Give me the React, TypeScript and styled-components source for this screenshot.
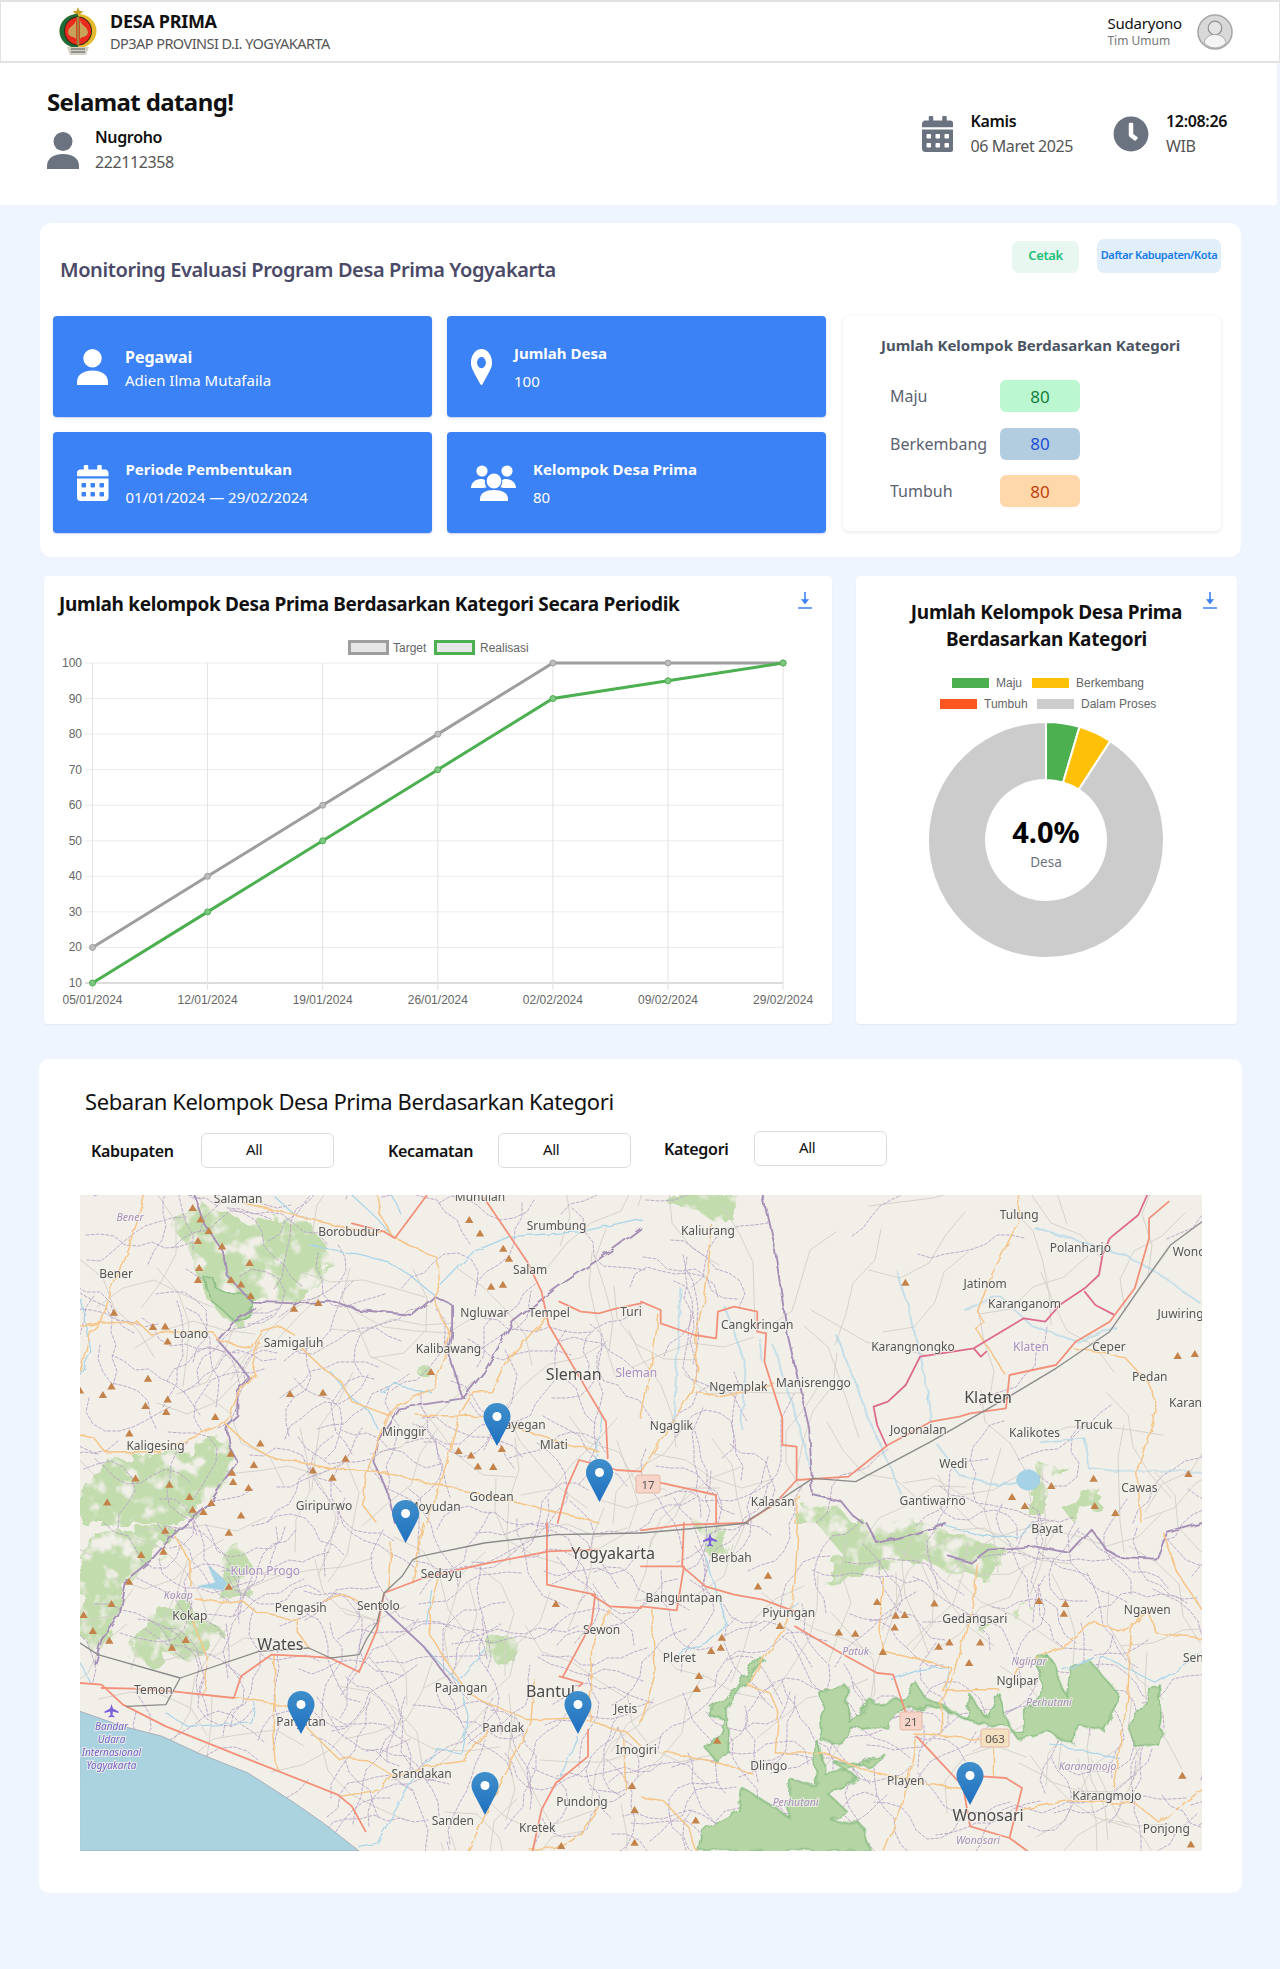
import React from "react";
import styled, { createGlobalStyle } from "styled-components";
import { FaCalendarAlt, FaClock, FaMapMarkerAlt } from "react-icons/fa";

const GlobalStyle = createGlobalStyle`
  * { box-sizing: border-box; }
  body {
    margin: 0;
    background: #eef5fe;
    font-family: "Noto Sans", "Open Sans", sans-serif;
    color: #111;
  }
`;

const Page = styled.div`
  min-height: 1969px;
  width: 1280px;
`;

const Header = styled.header`
  height: 63px;
  background: #fff;
  border: 1px solid #e2e2e2;
  border-width: 2px 1px 2px 1px;
  display: flex;
  align-items: center;
  justify-content: space-between;
  padding: 0 46px 0 58px;
`;
const Brand = styled.div`
  display: flex;
  align-items: center;
  gap: 13px;
`;
const BrandName = styled.div`
  font-size: 18px;
  font-weight: 700;
  line-height: 22px;
  letter-spacing: -0.3px;
`;
const BrandSub = styled.div`
  font-size: 14.5px;
  line-height: 22px;
  color: #555;
  letter-spacing: -0.55px;
`;
const Account = styled.div`
  display: flex;
  align-items: center;
  gap: 15px;
`;
const AccountName = styled.div`
  font-size: 15px;
  line-height: 19px;
  letter-spacing: -0.2px;
`;
const AccountRole = styled.div`
  font-size: 12px;
  line-height: 16px;
  color: #777;
`;

const Welcome = styled.section`
  width: 1277px;
  height: 142px;
  background: #fff;
  display: flex;
  justify-content: space-between;
  padding: 23px 50px 0 47px;
`;
const WelcomeTitle = styled.h1`
  margin: 0;
  font-size: 24px;
  line-height: 32px;
  font-weight: 700;
  letter-spacing: -0.6px;
`;
const Person = styled.div`
  display: flex;
  align-items: center;
  gap: 16px;
  margin-top: 7px;
`;
const Strong = styled.div`
  font-size: 16px;
  line-height: 25px;
  font-weight: 600;
  color: #111;
  letter-spacing: -0.35px;
`;
const Muted = styled.div`
  font-size: 16px;
  line-height: 25px;
  color: #555;
  letter-spacing: -0.4px;
`;
const Clocks = styled.div`
  display: flex;
  gap: 40px;
  padding-top: 23px;
`;
const ClockItem = styled.div`
  display: flex;
  align-items: center;
  gap: 17px;
  height: 50px;
  color: #6b7280;
`;
const CalendarIcon = styled(FaCalendarAlt)`
  width: 31.5px;
  height: 36px;
`;

const MainCard = styled.section`
  margin: 18px 39px 0 40px;
  height: 334px;
  background: #fff;
  border-radius: 12px;
  padding: 16px 20px 0 13px;
`;
const MainHead = styled.div`
  height: 77px;
  display: flex;
  justify-content: space-between;
  padding-left: 7px;
`;
const MainTitle = styled.h2`
  margin: 16px 0 0;
  font-size: 20px;
  line-height: 30px;
  font-weight: 600;
  color: #4a4a68;
  letter-spacing: -0.4px;
`;
const HeadButtons = styled.div`
  display: flex;
  align-items: flex-end;
  gap: 18px;
  height: 34px;
`;
const SoftButton = styled.button<{ $bg: string; $color: string; $w: number; $h: number; $size: number }>`
  width: ${(p) => p.$w}px;
  height: ${(p) => p.$h}px;
  padding: 0 0 4px;
  border: 0;
  border-radius: 7px;
  background: ${(p) => p.$bg};
  color: ${(p) => p.$color};
  font: 600 ${(p) => p.$size}px "Noto Sans", sans-serif;
  letter-spacing: -0.4px;
  white-space: nowrap;
`;
const StatGrid = styled.div`
  display: grid;
  grid-template-columns: 379px 379px 378px;
  grid-template-rows: 101px 101px;
  gap: 15px;
`;
const StatCard = styled.div<{ $gap: number }>`
  background: #3b82f6;
  border-radius: 4px;
  box-shadow: 0 1px 2px rgba(30, 64, 175, 0.25);
  color: #fff;
  display: flex;
  align-items: center;
  gap: ${(p) => p.$gap}px;
  padding-left: 24px;
`;
const PinIcon = styled(FaMapMarkerAlt)`
  width: 21px;
  height: 36px;
`;
const StatBody = styled.div<{ $shift: number }>`
  padding-top: ${(p) => p.$shift}px;
`;
const StatTitle = styled.div<{ $size?: number }>`
  font-size: ${(p) => p.$size || 15}px;
  line-height: 20px;
  font-weight: 700;
`;
const StatValue = styled.div<{ $top: number }>`
  font-size: 15px;
  line-height: 20px;
  margin-top: ${(p) => p.$top}px;
`;
const CategoryCard = styled.div`
  grid-column: 3;
  grid-row: 1 / span 2;
  height: 215px;
  margin: 0 -2px 0 2px;
  border-radius: 6px;
  box-shadow: 0 1px 4px rgba(0, 0, 0, 0.1);
  padding: 18px 0 0 47px;
`;
const CategoryTitle = styled.div`
  margin: 0 0 24px -9px;
  font-size: 15px;
  line-height: 22px;
  font-weight: 700;
  color: #4b5563;
`;
const CategoryRow = styled.div`
  display: flex;
  align-items: center;
  height: 32px;
  margin-bottom: 15.5px;
  font-size: 16px;
  color: #5b6270;
`;
const CategoryLabel = styled.div`
  width: 110px;
`;
const CategoryPill = styled.div<{ $bg: string; $color: string }>`
  width: 80px;
  height: 32px;
  border-radius: 6px;
  background: ${(p) => p.$bg};
  color: ${(p) => p.$color};
  display: flex;
  align-items: center;
  justify-content: center;
  font-size: 17px;
`;

const ChartRow = styled.div`
  display: flex;
  gap: 24px;
  margin: 19px 0 0 44px;
`;
const ChartCard = styled.section<{ $w: number }>`
  position: relative;
  width: ${(p) => p.$w}px;
  height: 448px;
  background: #fff;
  border-radius: 4px;
  box-shadow: 0 1px 2px rgba(0, 0, 0, 0.05);
`;
const LineTitle = styled.h3`
  margin: 0;
  height: 54px;
  padding: 14px 0 0 15px;
  font-size: 19px;
  line-height: 28px;
  font-weight: 700;
  letter-spacing: -0.33px;
`;
const DonutTitle = styled.h3`
  margin: 0;
  height: 89px;
  padding-top: 23px;
  font-size: 19px;
  line-height: 27px;
  font-weight: 700;
  text-align: center;
  letter-spacing: -0.3px;
`;
const DownloadLink = styled.a`
  position: absolute;
  top: 16px;
  right: 20px;
  display: block;
  width: 14px;
  height: 17px;
  color: #3b82f6;
`;
const ChartSvg = styled.svg`
  display: block;
  font-family: "Liberation Sans", Arial, sans-serif;
  font-size: 12px;
  fill: #666;
`;

const MapCard = styled.section`
  margin: 35px 38px 0 39px;
  height: 834px;
  background: #fff;
  border-radius: 10px;
  padding: 27px 0 0 41px;
`;
const MapTitle = styled.h2`
  margin: 0 0 17px 5px;
  font-size: 22px;
  line-height: 30px;
  font-weight: 400;
  letter-spacing: -0.42px;
`;
const Filters = styled.div`
  display: flex;
  align-items: flex-start;
  padding-left: 11px;
  margin-bottom: 27px;
`;
const FilterGroup = styled.label<{ $after: number; $lift: number }>`
  display: flex;
  align-items: center;
  margin-right: ${(p) => p.$after}px;
  margin-top: ${(p) => p.$lift}px;
  font-size: 16px;
  font-weight: 600;
  letter-spacing: -0.3px;
`;
const FilterName = styled.span<{ $w: number }>`
  width: ${(p) => p.$w}px;
`;
const FilterBox = styled.div`
  width: 133px;
  height: 35px;
  border: 1px solid #dcdcdc;
  border-radius: 6px;
  padding-left: 44px;
  font-size: 15px;
  font-weight: 400;
  line-height: 31px;
`;
const MapSvg = styled.svg`
  display: block;
  background: #f2efe9;
  filter: blur(0.45px);
`;
const Line = styled.path<{ $color: string; $w: number; $dash?: string; $fill?: string }>`
  fill: ${(p) => p.$fill || "none"};
  stroke: ${(p) => p.$color};
  stroke-width: ${(p) => p.$w};
  stroke-dasharray: ${(p) => p.$dash || "none"};
  stroke-linejoin: round;
  stroke-linecap: round;
  vector-effect: non-scaling-stroke;
`;
type LabelKind = "s" | "b" | "i" | "p" | "a";
const labelSize: Record<LabelKind, number> = { s: 12, b: 16, i: 10.5, p: 12, a: 10 };
const labelColor: Record<LabelKind, string> = { s: "#555", b: "#4a4a4a", i: "#a58fb8", p: "#a98fc0", a: "#7a5fc8" };
const MapLabel = styled.text<{ $kind: LabelKind }>`
  font-family: "Noto Sans", sans-serif;
  font-size: ${(p) => labelSize[p.$kind]}px;
  font-style: ${(p) => (p.$kind === "i" || p.$kind === "a" ? "italic" : "normal")};
  fill: ${(p) => labelColor[p.$kind]};
  stroke: rgba(245, 243, 238, 0.75);
  stroke-width: 2px;
  paint-order: stroke;
  text-anchor: middle;
  dominant-baseline: central;
`;
const Shield = styled.text`
  font-family: "Noto Sans", sans-serif;
  font-size: 11.5px;
  fill: #555;
  text-anchor: middle;
  dominant-baseline: central;
`;

const UserGlyph = ({ w, h, color }: { w: number; h: number; color: string }) => (
  <svg width={w} height={h} viewBox="0 0 32 37" fill={color}>
    <circle cx="16" cy="9.5" r="9.5" />
    <path d="M0 37v-3c0-8 7-12 16-12s16 4 16 12v3z" />
  </svg>
);

const GroupGlyph = () => (
  <svg width="45" height="36" viewBox="0 0 45 36" fill="#fff">
    <circle cx="11" cy="6" r="5.6" />
    <circle cx="36" cy="6" r="5.6" />
    <circle cx="23" cy="16" r="7.4" />
    <path d="M0 23c0-5 4-9 10-9 2 0 3 .5 4 1-.6 2 0 5 1.6 7.5-2 0-3 .5-4 .5z" />
    <path d="M45 23c0-5-4-9-10-9-2 0-3 .5-4 1 .6 2 0 5-1.6 7.5 2 0 3 .5 4 .5z" />
    <path d="M9 36v-2c0-6 6-9 14-9s14 3 14 9v2z" />
  </svg>
);

const Emblem = () => (
  <svg width="38" height="49" viewBox="0 0 38 49">
    <path d="M19 0l1.6 4 4 .2-3 2.6 1 3.8-3.6-2.2-3.6 2.2 1-3.8-3-2.6 4-.2z" fill="#c9a227" />
    <ellipse cx="19" cy="24" rx="18.5" ry="17" fill="#e3b92e" />
    <path d="M19 7C9 7 .5 14 .5 24S9 41 19 41z" fill="#1f6b3a" />
    <ellipse cx="19" cy="24" rx="14" ry="14.500" fill="#3a2a14" />
    <ellipse cx="19" cy="24" rx="13" ry="13.500" fill="#ea2a1c" />
    <path d="M17 13c-1 6-8 6-8 13 2 5 6 3 8 6zM21 13c1 6 8 6 8 13-2 5-6 3-8 6z" fill="#c9a35a" />
    <rect x="17.6" y="10" width="2.8" height="28" fill="#a9813a" />
    <path d="M8 40h22l-3 8H11z" fill="#d4d0c4" />
    <path d="M12 42h14M12 45h14" stroke="#555" strokeWidth="1" />
  </svg>
);

const Avatar = () => (
  <svg width="36" height="36" viewBox="0 0 36 36">
    <circle cx="18" cy="18" r="17" fill="#d8d8d8" stroke="#a8a8a8" strokeWidth="1.6" />
    <circle cx="18" cy="14" r="6.8" fill="#e4e4e4" stroke="#8f8f8f" strokeWidth="1.2" />
    <path d="M7 29c1-6 6-8.500 11-8.500S28 23 29 29c-3 3-7 5-11 5S10 32 7 29z" fill="#f4f4f4" stroke="#9a9a9a" strokeWidth="0.8" />
  </svg>
);

const DownloadIcon = () => (
  <DownloadLink>
    <svg width="14" height="17" viewBox="0 0 14 17" fill="none" stroke="currentColor">
      <path d="M7 0v11" strokeWidth="1.6" />
      <path d="M3.500 7.500L7 12l3.500-4.500z" fill="currentColor" strokeWidth="0.6" />
      <path d="M0 16h14" strokeWidth="1.5" />
    </svg>
  </DownloadLink>
);

const xLabels = ["05/01/2024", "12/01/2024", "19/01/2024", "26/01/2024", "02/02/2024", "09/02/2024", "29/02/2024"];
const target = [20, 40, 60, 80, 100, 100, 100];
const actual = [10, 30, 50, 70, 90, 95, 100];
const px = (i: number) => 48.5 + i * 115.1;
const py = (v: number) => 33 + ((100 - v) * 320) / 90;
const yTicks = [100, 90, 80, 70, 60, 50, 40, 30, 20, 10];
const pointsOf = (vals: number[]) => vals.map((v, i) => `${px(i)},${py(v)}`).join(" ");

const LineChart = () => (
  <ChartSvg width="788" height="394" viewBox="0 0 788 394">
    <rect x="305.500" y="11.500" width="38" height="12" fill="#e6e6e6" stroke="#9e9e9e" strokeWidth="3" />
    <text x="349" y="21.500">Target</text>
    <rect x="391.500" y="11.500" width="38" height="12" fill="#e6e6e6" stroke="#4caf50" strokeWidth="3" />
    <text x="436" y="21.500">Realisasi</text>
    {yTicks.map((v) => (
      <g key={v}>
        <line x1="41" x2="739" y1={py(v)} y2={py(v)} stroke={v === 10 ? "#dcdcdc" : "#ececec"} strokeWidth={v === 10 ? 2 : 1} />
        <text x="38" y={py(v) + 4} textAnchor="end">{v}</text>
      </g>
    ))}
    {xLabels.map((label, i) => (
      <g key={label}>
        <line x1={px(i)} x2={px(i)} y1="33" y2="360" stroke="#e2e2e2" />
        <text x={px(i)} y="374" textAnchor="middle">{label}</text>
      </g>
    ))}
    <polyline points={pointsOf(target)} fill="none" stroke="#9e9e9e" strokeWidth="3" />
    <polyline points={pointsOf(actual)} fill="none" stroke="#4caf50" strokeWidth="3" />
    {target.map((v, i) => <circle key={i} cx={px(i)} cy={py(v)} r="3" fill="#bdbdbd" stroke="#9e9e9e" />)}
    {actual.map((v, i) => <circle key={i} cx={px(i)} cy={py(v)} r="3" fill="#81c784" stroke="#4caf50" />)}
  </ChartSvg>
);

const polar = (r: number, deg: number) => {
  const a = (deg * Math.PI) / 180;
  return `${190 + r * Math.sin(a)} ${175 - r * Math.cos(a)}`;
};
const slice = (from: number, to: number) => {
  const big = to - from > 180 ? 1 : 0;
  return `M${polar(118, from)}A118 118 0 ${big} 1 ${polar(118, to)}L${polar(60, to)}A60 60 0 ${big} 0 ${polar(60, from)}Z`;
};
const legend = [
  { x: 96, y: 13, color: "#4caf50", name: "Maju" },
  { x: 176, y: 13, color: "#ffc107", name: "Berkembang" },
  { x: 84, y: 34, color: "#ff5722", name: "Tumbuh" },
  { x: 181, y: 34, color: "#cccccc", name: "Dalam Proses" },
];

const DonutChart = () => (
  <ChartSvg width="381" height="359" viewBox="0 0 381 359">
    {legend.map((l) => (
      <g key={l.name}>
        <rect x={l.x} y={l.y} width="37" height="10" fill={l.color} />
        <text x={l.x + 44} y={l.y + 9}>{l.name}</text>
      </g>
    ))}
    <path d={slice(0, 16.5)} fill="#4caf50" stroke="#fff" strokeWidth="2" />
    <path d={slice(16.5, 33)} fill="#ffc107" stroke="#fff" strokeWidth="2" />
    <path d={slice(33, 360)} fill="#cccccc" stroke="#fff" strokeWidth="2" />
    <text x="190" y="178" textAnchor="middle" fontSize="29" fontWeight="700" fill="#000" fontFamily="Noto Sans, sans-serif">4.0%</text>
    <text x="190" y="202" textAnchor="middle" fontSize="13.5" fill="#6b7280" fontFamily="Noto Sans, sans-serif">Desa</text>
  </ChartSvg>
);

type Tri = [number, number];
type Lbl = [string, number, number, LabelKind?];
type Quad = {
  ox: number; oy: number;
  light?: string; forest?: string; sea?: string; lake?: string;
  water?: string; border?: string; yellow?: string; red?: string; pink?: string; rail?: string;
  tris: Tri[]; labels: Lbl[];
};

const quads: Quad[] = [
  {
    ox: 0, oy: 0,
    light: "M250 70L310 50L330 10L420 60L480 90L570 60L650 90L700 200L640 320L500 320L440 390L410 380L360 320L320 220L300 150L255 100Z M0 984L0 900L60 810L150 780L320 760L400 720L430 790L360 930L300 984Z M940 510L965 500L990 540L945 540Z",
    forest: "M350 250L370 245L380 280L440 300L480 300L490 345L430 375L360 310Z",
    water: "M540 0L600 60L640 70 M760 0L830 70L870 120 M870 0L900 60 M1568 70L1400 110L1200 125L1100 170L1010 270 M640 150L760 175L860 200L920 240L990 300 M0 310L20 400L30 470L0 540 M700 530L760 610L810 650L830 700 M840 590L880 565L940 590L980 590 M1460 660L1440 800",
    border: "M320 0L350 90L400 170L410 240L480 320L600 325L710 320L780 345L930 360L990 305L1040 330L1040 420L1030 480L1060 580L1070 610 M1070 610L1130 530L1210 380L1330 280L1480 170L1568 100 M490 340L430 380L385 435L430 490L475 550L440 590L440 660L410 690L420 760L440 800L400 860L360 930L300 984 M1070 610L890 640L830 740L820 800L860 890L880 984",
    yellow: "M460 25L560 50L690 85L750 100L830 115L860 100 M830 0L840 60L870 120L920 150L1000 190L1005 280L990 310L1010 370L1035 410L1020 490L985 580L890 630L860 660L760 620L730 560L680 520L620 460 M0 395L50 385L160 380L200 420L260 410L370 410L390 440L480 460L510 410L560 395L600 420 M500 440L480 500L490 540L440 600L420 660L380 700L300 735L220 770L70 770L40 730L0 720 M400 680L460 740L530 785L700 820L860 835L1000 870L1220 920L1400 970L1450 984 M860 660L830 740L800 840L790 930L830 984 M940 660L1130 665 M1200 690L1280 720L1350 745L1450 770 M1100 590L1060 660L1010 860L970 984 M1100 590L1150 590L1190 500L1300 370 M180 0L170 50L130 170L90 280L60 380L30 410L0 530",
    red: "M970 0L880 130L850 110L760 85 M1130 10L1250 200L1290 290L1310 390L1420 590L1470 680L1475 790 M1340 320L1400 350L1450 355L1500 340L1568 325 M1395 795L1500 825L1568 830 M1395 795L1360 880L1335 984",
    tris: [[315,38],[337,72],[360,107],[397,153],[330,137],[474,203],[333,218],[330,254],[422,254],[450,267],[477,302],[598,340],[666,323],[95,352],[204,395],[238,393],[245,438],[190,550],[88,573],[64,599],[183,632],[245,612],[241,650],[378,665],[138,714],[504,744],[421,775],[486,809],[425,832],[428,860],[471,878],[450,960],[367,923],[345,950],[315,943],[306,905],[250,868],[155,849],[76,921],[587,596],[679,592],[742,790],[651,825],[706,847],[1088,74],[1118,114],[1183,160],[1199,190],[1149,274],[1182,268],[981,530],[1058,767],[1093,780],[1112,813],[1155,815],[1179,761],[0,585]],
    labels: [["Salaman",442,10],["Bener",140,65,"i"],["Borobudur",752,108],["Muntilan",1118,3],["Srumbung",1332,90],["Salam",1258,224],["Bener",101,234],["Ngluwar",1130,352],["Tempel",1312,353],["Turi",1540,350],["Loano",310,416],["Samigaluh",597,441],["Kalibawang",1030,460],["Sleman",1380,537,"b"],["Sleman",1555,533,"p"],["Kaligesing",211,751],["Minggir",906,708],["Sayegan",1235,688],["Mlati",1324,747],["Giripurwo",682,930],["Moyudan",990,935],["Godean",1150,905]],
  },
  {
    ox: 561, oy: 0,
    light: "M80 0L270 0L250 60L215 90L180 60L110 30L70 30Z M1120 810L1190 810L1140 870L1130 960L1080 960L1090 900Z M1170 930L1220 905L1280 880L1280 940L1190 960Z M440 920L540 920L590 984L430 984Z",
    water: "M545 420L590 540L640 680L690 800L730 900 M715 230L750 340L770 440L800 580L810 680 M830 750L890 840L1000 870L1100 850 M1100 100L1200 130L1350 180L1440 230L1568 330 M905 345L1000 300L1090 390L1220 440L1330 400 M110 280L100 500L90 700 M230 330L290 500L280 700 M330 430L340 500 M370 450L430 650L470 810 M1120 745L1240 730L1250 820L1320 830L1568 830",
    lake: "M1050 855a32 30 0 1 0 64 0a32 30 0 1 0 -64 0",
    border: "M340 0L375 170L410 420L470 700L480 900L560 920L590 960L620 984",
    yellow: "M1055 0L1055 80L980 240L940 350L960 385L935 400L1020 540 M200 90L180 290L150 430L160 530L140 590L0 830 M150 590L220 605L290 590L370 565 M50 360L30 500L0 670 M1210 460L1350 485L1425 570L1440 650L1385 830L1400 984 M440 900L430 984",
    red: "M0 320L55 345L55 385L150 420L210 430L215 350L260 335L325 350L325 410L350 415L345 500L395 670L395 750L435 755L435 855L580 845L690 750L810 680L890 665L920 655L1020 640L1030 540L1160 510L1215 440L1310 380L1380 280L1420 130L1420 70L1475 20 M0 858L50 862L210 900L210 984 M435 855L370 930L290 984",
    pink: "M1415 0L1390 60L1310 130L1290 180L1280 240L1240 280L1170 330L1130 380L1070 370L930 460L780 485L740 570L690 620L650 635L660 690L685 750 M1240 290L1270 330L1320 358 M930 460L950 485L965 470",
    rail: "M1568 80L1480 150L1400 270L1310 410L1160 520L1020 610L810 740L600 860L480 850L290 984",
    tris: [[739,262],[1500,482],[1548,476],[1265,850],[1147,872],[1037,905],[1073,932],[1268,932],[1326,953],[1530,836]],
    labels: [["Tulung",1057,58],["Polanharjo",1228,157],["Wono",1532,168],["Jatinom",962,265],["Karanganom",1072,325],["Juwiring",1508,355],["Kaliurang",187,105],["Cangkringan",325,387],["Karangnongko",760,455],["Klaten",1090,455,"p"],["Ceper",1308,455],["Pedan",1422,545],["Klaten",970,606,"b"],["Ngemplak",272,575],["Manisrenggo",482,563],["Ngaglik",85,692],["Jogonalan",775,702],["Kalikotes",1100,711],["Trucuk",1265,688],["Karan",1522,623],["Wedi",873,805],["Kalasan",368,920],["Gantiwarno",815,917],["Cawas",1393,877]],
  },
  {
    ox: 0, oy: 328,
    sea: "M0 565L120 610L230 640L330 690L470 750L600 840L680 900L780 984L0 984Z",
    lake: "M360 130L380 180L330 190L400 200L410 180Z",
    light: "M0 100L60 20L240 0L270 20L200 110L130 180L100 300L60 380L0 360Z M130 380L210 240L260 260L290 200L330 280L400 320L350 400L300 410L240 400L210 430L130 400Z M400 100L440 60L480 130L470 220L390 230L400 170Z M1140 330L1225 350L1215 415L1135 415Z",
    water: "M850 260L960 370L1060 480L1085 580L1065 690L1000 680L940 750L830 960L780 970 M240 570L300 610L480 600L490 540 M1390 640L1340 770 M1130 380L1060 470 M0 420L30 480 M980 200L965 300",
    border: "M300 0L265 30L200 110L130 170L110 280L60 350L40 420 M850 260L960 370L1040 480",
    yellow: "M265 40L310 120L310 190 M320 225L400 240L450 230L490 265L570 285L610 290L610 330L640 375 M680 230L730 215L790 240 M310 280L355 400L345 510 M430 525L580 550L640 620L720 705L800 710L870 755L840 800L730 820 M545 400L540 620L550 740 M1000 170L975 260L980 340L1040 440L1090 515L1180 560L1250 590L1400 585L1530 630L1568 670 M1140 620L1070 715L970 730L870 760 M1270 470L1260 600L1140 860L1085 984 M1480 260L1430 370L1425 590 M1520 650L1525 800 M1450 850L1400 930L1340 970L1260 984 M960 0L930 180 M870 60L860 200",
    red: "M0 480L60 485L120 545L240 610L450 700L720 815L760 850L798 925 M60 495L150 497L260 505L430 525 M430 525L450 460L535 395L640 400L700 405L780 447L830 320L850 210L960 165L1120 125L1310 85L1450 80 M1305 0L1305 185L1440 215L1430 300L1350 460 M1430 215L1480 250L1568 255 M1395 490L1405 480L1340 460 M1420 620L1420 700L1330 780L1290 860L1265 984",
    rail: "M0 360L50 395L280 465L500 385L640 375L700 405L780 395L800 350L830 300L850 210L900 160L930 110L950 100L1130 60L1330 35L1568 30 M280 465L240 545L130 550",
    tris: [[238,22],[416,28],[233,85],[171,95],[137,175],[416,190],[88,242],[10,275],[36,323],[82,352],[257,373],[296,350],[1330,242],[1543,788],[1550,860],[1345,968],[1550,958]],
    labels: [["Kulon Progo",518,142,"p"],["Kokap",275,215,"i"],["Kokap",307,276],["Pengasih",617,253],["Sentolo",834,246],["Sedayu",1010,150],["Yogyakarta",1490,90,"b"],["Wates",560,364,"b"],["Temon",205,500],["Pajangan",1065,492],["Bantul",1315,505,"b"],["Jetis",1525,555],["Pandak",1183,612],["Panjatan",618,595],["Sewon",1458,320],["Imogiri",1555,680],["Srandakan",955,752],["Pundong",1403,835],["Sanden",1042,892],["Kretek",1278,912],["Bandar",88,610,"a"],["Udara",88,649,"a"],["Internasional",88,688,"a"],["Yogyakarta",88,727,"a"]],
  },
  {
    ox: 561, oy: 328,
    light: "M490 0L800 0L1020 80L970 170L880 150L800 120L700 130L600 170L510 190L560 90Z M930 320L1090 240L1050 280L950 320Z M140 0L250 0L240 90L180 90L170 30Z",
    forest: "M500 510L575 490L585 600L640 540L730 530L770 480L800 530L860 560L910 590L920 515L960 580L1000 510L1020 580L1040 630L1070 630L1070 560L1120 500L1110 420L1140 400L1190 520L1200 440L1260 420L1340 520L1290 620L1220 600L1215 670L1140 630L1060 655L1030 610L940 600L880 570L800 550L730 560L690 610L590 620L570 650L510 660Z M1360 600L1420 520L1445 480L1455 600L1440 660L1380 670Z M500 660L480 700L490 790L420 770L410 880L340 830L280 790L270 860L170 920L160 984L640 984L620 910L530 890L580 870L520 810L610 770L540 720L620 730L690 705L630 700L600 745L510 750Z M185 570L270 500L330 400L345 410L280 500L240 560L245 680L210 715L185 680L215 630L235 590Z",
    water: "M830 0L960 40L1060 40L1100 0 M1140 660L1220 680L1340 710 M1180 440L1290 400L1440 480L1530 420L1568 380 M700 470L780 440L860 430L850 490 M440 240L400 270 M180 100L240 300L180 360L90 400",
    border: "M630 0L660 60L770 30L850 0 M860 100L920 120L970 80L1100 70L1200 90L1260 20L1300 80L1340 105L1440 110L1470 30L1568 0",
    yellow: "M440 0L430 180L410 300L340 410L300 490L360 510L385 570L375 690L510 690L620 740L790 780L900 800 M680 170L665 320L680 385L870 435L840 500L1000 500 M940 120L930 230L880 440L840 540L840 630 M760 630L950 650 M770 650L730 850L680 984 M985 670L985 760 M60 685L200 715L310 750 M1060 860L1210 830L1380 840L1450 900L1530 830L1568 800 M1030 500L1050 440L1190 360L1265 295L1340 330L1420 270L1440 330L1568 345 M1400 270L1370 320L1360 530L1320 790 M1460 30L1500 150L1568 260 M0 820L60 830L130 910L155 984 M30 260L40 450L0 600",
    red: "M0 22L120 5L290 0 M120 0L115 130L180 190L260 215L340 230L430 265 M0 250L100 262L120 130 M0 130L115 130 M430 310L550 385L660 450L705 455L740 570 M770 640L900 790L920 910L1030 945L1080 984 M950 760L1020 765L1065 795L1030 945",
    rail: "M0 30L130 18L300 0",
    tris: [[355,157],[327,189],[660,236],[820,240],[1112,233],[1186,242],[1182,271],[712,277],[737,275],[709,312],[388,308],[553,327],[599,331],[226,343],[223,373],[196,383],[832,370],[862,357],[948,357],[917,419],[676,386],[162,458],[156,497],[213,652],[1513,757],[153,891],[1537,963]],
    labels: [["Bayat",1135,15],["Berbah",252,102],["Banguntapan",120,222],["Piyungan",413,268],["Gedangsari",933,285],["Ngawen",1415,258],["Patuk",600,385,"i"],["Nglipar",1085,413,"i"],["Pleret",107,402],["Nglipar",1052,472],["Perhutani",1140,538,"i"],["Sen",1544,403],["Karangmojo",1248,730,"i"],["Dlingo",357,728],["Playen",740,771],["Karangmojo",1302,818],["Perhutani",432,838,"i"],["Wonosari",970,877,"b"],["Wonosari",942,950,"i"],["Ponjong",1468,916]],
  },
];

const shields = [
  { x: 568, y: 289, w: 24, label: "17", bg: "#f6d5c8" },
  { x: 831, y: 526, w: 22, label: "21", bg: "#f6d5c8" },
  { x: 915, y: 543, w: 28, label: "063", bg: "#f5e0c0" },
];
const markers = [[417, 251], [519.5, 307], [325.6, 348], [221, 539], [498, 539], [405, 620], [890, 610]];
const planes = [[31.5, 516], [630, 345]];

// deterministic scribble for the thin admin borders and minor roads of the tiles
const seeded = (start: number) => {
  let s = start;
  return () => {
    s = (s * 1664525 + 1013904223) % 4294967296;
    return s / 4294967296;
  };
};
const isSea = (x: number, y: number) => y > 516 + x * 0.5;
const scribble = (count: number, seed: number, steps: number, len: number, emptyNorthEast: number) => {
  const r = seeded(seed);
  const out: string[] = [];
  for (let n = 0; n < count; n++) {
    let x = r() * 1122;
    let y = r() * 656;
    const skip = r();
    if (isSea(x, y) || (x > 640 && y < 280 && skip < emptyNorthEast)) continue;
    let a = r() * Math.PI * 2;
    let d = `M${x.toFixed(0)} ${y.toFixed(0)}`;
    for (let i = 0; i < steps; i++) {
      a += (r() - 0.5) * 1.5;
      x += Math.cos(a) * len;
      y += Math.sin(a) * len;
      if (isSea(x, y)) break;
      d += `L${x.toFixed(0)} ${y.toFixed(0)}`;
    }
    out.push(d);
  }
  return out.join(" ");
};
const minorBorders = scribble(420, 77, 8, 14, 0.85);
const minorRoads = scribble(170, 4242, 4, 32, 0);

const MapDrawing = () => {
  const layer = (q: Quad, key: keyof Quad) => (q[key] as string | undefined) || "";
  const inQuad = (children: (q: Quad) => React.ReactNode) =>
    quads.map((q, i) => (
      <g key={i} transform={`translate(${q.ox} ${q.oy}) scale(${1 / 2.795} ${1 / 3})`}>
        {children(q)}
      </g>
    ));
  return (
    <MapSvg width="1122" height="656" viewBox="0 0 1122 656">
      <defs>
        <linearGradient id="pinFill" x1="0" y1="0" x2="0" y2="1">
          <stop offset="0" stopColor="#3f8fcb" />
          <stop offset="1" stopColor="#1f6fc0" />
        </linearGradient>
        <filter id="mottle" filterUnits="userSpaceOnUse" x="0" y="0" width="1122" height="656">
          <feTurbulence type="fractalNoise" baseFrequency="0.05" numOctaves="3" seed="4" result="noise" />
          <feDisplacementMap in="SourceGraphic" in2="noise" scale="22" result="moved" />
          <feColorMatrix in="noise" type="matrix" values="0 0 0 0 0 0 0 0 0 0 0 0 0 0 0 5 0 0 0 -1.500" result="holes" />
          <feComposite in="moved" in2="holes" operator="in" />
        </filter>
        <filter id="rough" filterUnits="userSpaceOnUse" x="0" y="0" width="1122" height="656">
          <feTurbulence type="fractalNoise" baseFrequency="0.06" numOctaves="2" seed="9" result="noise" />
          <feDisplacementMap in="SourceGraphic" in2="noise" scale="14" />
        </filter>
        <filter id="wobble" filterUnits="userSpaceOnUse" x="0" y="0" width="1122" height="656">
          <feTurbulence type="fractalNoise" baseFrequency="0.07" numOctaves="2" seed="2" result="noise" />
          <feDisplacementMap in="SourceGraphic" in2="noise" scale="6" />
        </filter>
      </defs>
      <g filter="url(#mottle)">
        {inQuad((q) => q.light && <Line d={q.light} $color="none" $w={0} $fill="#c2dcae" />)}
      </g>
      <Line d={minorRoads} $color="#d2cfc8" $w={0.9} />
      <Line d={minorBorders} $color="#b8a4c6" $w={0.9} $dash="3 2" />
      {inQuad((q) => q.sea && <Line d={q.sea} $color="#a0a4b0" $w={0.8} $fill="#aad3df" />)}
      <g filter="url(#rough)">
        {inQuad((q) => q.forest && <Line d={q.forest} $color="#8cbf86" $w={1.6} $fill="#b6d5a4" />)}
      </g>
      {inQuad((q) => q.lake && <Line d={q.lake} $color="#9ccde2" $w={1} $fill="#a6d2e6" />)}
      <g filter="url(#wobble)">
        {inQuad((q) => <Line d={layer(q, "water")} $color="#a9d4e8" $w={1.2} />)}
        {inQuad((q) => <Line d={layer(q, "border")} $color="#a68fb6" $w={1.9} />)}
        {inQuad((q) => <Line d={layer(q, "yellow")} $color="#f5c68a" $w={1.5} />)}
      </g>
      {inQuad((q) => <Line d={layer(q, "red")} $color="#f2907a" $w={1.8} />)}
      {inQuad((q) => <Line d={layer(q, "pink")} $color="#de6a8c" $w={1.8} />)}
      {inQuad((q) => <Line d={layer(q, "rail")} $color="#8a8a8a" $w={1.3} />)}
      {quads.map((q) =>
        q.tris.map(([x, y]) => {
          const cx = q.ox + x / 2.795;
          const cy = q.oy + y / 3;
          return <polygon key={`${q.ox}-${q.oy}-${x}-${y}`} points={`${cx - 4.2},${cy + 3.4} ${cx},${cy - 3.6} ${cx + 4.2},${cy + 3.4}`} fill="#c4834a" />;
        })
      )}
      {planes.map(([x, y]) => (
        <path key={x} transform={`translate(${x} ${y})`} d="M0 -7l1.400 4.500 5.600 3v1.500l-5.600-1.500-.4 3.500 2 1.500v1l-3-.8-3 .8v-1l2-1.500-.4-3.500-5.600 1.500v-1.500l5.600-3z" fill="#7a5fd8" />
      ))}
      {quads.map((q) =>
        q.labels.map(([text, x, y, kind]) => (
          <MapLabel key={`${text}-${q.ox}-${x}`} $kind={kind || "s"} x={q.ox + x / 2.795} y={q.oy + y / 3}>
            {text}
          </MapLabel>
        ))
      )}
      {shields.map((s) => (
        <g key={s.label}>
          <rect x={s.x - s.w / 2} y={s.y - 9} width={s.w} height="18" rx="2" fill={s.bg} stroke="#e3b9a6" />
          <Shield x={s.x} y={s.y}>{s.label}</Shield>
        </g>
      ))}
      {markers.map(([x, y]) => (
        <g key={x} transform={`translate(${x - 13.500} ${y - 43})`}>
          <path d="M13.500 0C6 0 0 6 0 13.500c0 3 1 5.500 2.500 8.500L13.500 43l11-21c1.500-3 2.500-5.500 2.500-8.500C27 6 21 0 13.500 0z" fill="url(#pinFill)" />
          <circle cx="13.500" cy="13.500" r="4.500" fill="#fff" />
        </g>
      ))}
    </MapSvg>
  );
};

function App() {
  return (
    <Page>
      <GlobalStyle />
      <Header>
        <Brand>
          <Emblem />
          <div>
            <BrandName>DESA PRIMA</BrandName>
            <BrandSub>DP3AP PROVINSI D.I. YOGYAKARTA</BrandSub>
          </div>
        </Brand>
        <Account>
          <div>
            <AccountName>Sudaryono</AccountName>
            <AccountRole>Tim Umum</AccountRole>
          </div>
          <Avatar />
        </Account>
      </Header>

      <Welcome>
        <div>
          <WelcomeTitle>Selamat datang!</WelcomeTitle>
          <Person>
            <UserGlyph w={32} h={37} color="#6b7280" />
            <div>
              <Strong>Nugroho</Strong>
              <Muted>222112358</Muted>
            </div>
          </Person>
        </div>
        <Clocks>
          <ClockItem>
            <CalendarIcon />
            <div>
              <Strong>Kamis</Strong>
              <Muted>06 Maret 2025</Muted>
            </div>
          </ClockItem>
          <ClockItem>
            <FaClock size={36} />
            <div>
              <Strong>12:08:26</Strong>
              <Muted>WIB</Muted>
            </div>
          </ClockItem>
        </Clocks>
      </Welcome>

      <MainCard>
        <MainHead>
          <MainTitle>Monitoring Evaluasi Program Desa Prima Yogyakarta</MainTitle>
          <HeadButtons>
            <SoftButton $bg="#e8f7f0" $color="#1fc07a" $w={67} $h={32} $size={13}>Cetak</SoftButton>
            <SoftButton $bg="#e1effa" $color="#1a7be8" $w={124} $h={34} $size={11}>Daftar Kabupaten/Kota</SoftButton>
          </HeadButtons>
        </MainHead>
        <StatGrid>
          <StatCard $gap={17}>
            <UserGlyph w={31} h={36} color="#fff" />
            <StatBody $shift={4}>
              <StatTitle $size={16}>Pegawai</StatTitle>
              <StatValue $top={3}>Adien Ilma Mutafaila</StatValue>
            </StatBody>
          </StatCard>
          <StatCard $gap={22}>
            <PinIcon preserveAspectRatio="none" />
            <StatBody $shift={0}>
              <StatTitle>Jumlah Desa</StatTitle>
              <StatValue $top={8}>100</StatValue>
            </StatBody>
          </StatCard>
          <CategoryCard>
            <CategoryTitle>Jumlah Kelompok Berdasarkan Kategori</CategoryTitle>
            <CategoryRow>
              <CategoryLabel>Maju</CategoryLabel>
              <CategoryPill $bg="#bbf7d0" $color="#15803d">80</CategoryPill>
            </CategoryRow>
            <CategoryRow>
              <CategoryLabel>Berkembang</CategoryLabel>
              <CategoryPill $bg="#b3cde0" $color="#1d4ed8">80</CategoryPill>
            </CategoryRow>
            <CategoryRow>
              <CategoryLabel>Tumbuh</CategoryLabel>
              <CategoryPill $bg="#fed7aa" $color="#c2410c">80</CategoryPill>
            </CategoryRow>
          </CategoryCard>
          <StatCard $gap={17}>
            <CalendarIcon />
            <StatBody $shift={0}>
              <StatTitle>Periode Pembentukan</StatTitle>
              <StatValue $top={8}>01/01/2024 — 29/02/2024</StatValue>
            </StatBody>
          </StatCard>
          <StatCard $gap={17}>
            <GroupGlyph />
            <StatBody $shift={0}>
              <StatTitle>Kelompok Desa Prima</StatTitle>
              <StatValue $top={8}>80</StatValue>
            </StatBody>
          </StatCard>
        </StatGrid>
      </MainCard>

      <ChartRow>
        <ChartCard $w={788}>
          <LineTitle>Jumlah kelompok Desa Prima Berdasarkan Kategori Secara Periodik</LineTitle>
          <DownloadIcon />
          <LineChart />
        </ChartCard>
        <ChartCard $w={381}>
          <DonutTitle>
            Jumlah Kelompok Desa Prima
            <br />
            Berdasarkan Kategori
          </DonutTitle>
          <DownloadIcon />
          <DonutChart />
        </ChartCard>
      </ChartRow>

      <MapCard>
        <MapTitle>Sebaran Kelompok Desa Prima Berdasarkan Kategori</MapTitle>
        <Filters>
          <FilterGroup $after={54} $lift={0}>
            <FilterName $w={110}>Kabupaten</FilterName>
            <FilterBox>All</FilterBox>
          </FilterGroup>
          <FilterGroup $after={33} $lift={0}>
            <FilterName $w={110}>Kecamatan</FilterName>
            <FilterBox>All</FilterBox>
          </FilterGroup>
          <FilterGroup $after={0} $lift={-2}>
            <FilterName $w={90}>Kategori</FilterName>
            <FilterBox>All</FilterBox>
          </FilterGroup>
        </Filters>
        <MapDrawing />
      </MapCard>
    </Page>
  );
}

export default App;
